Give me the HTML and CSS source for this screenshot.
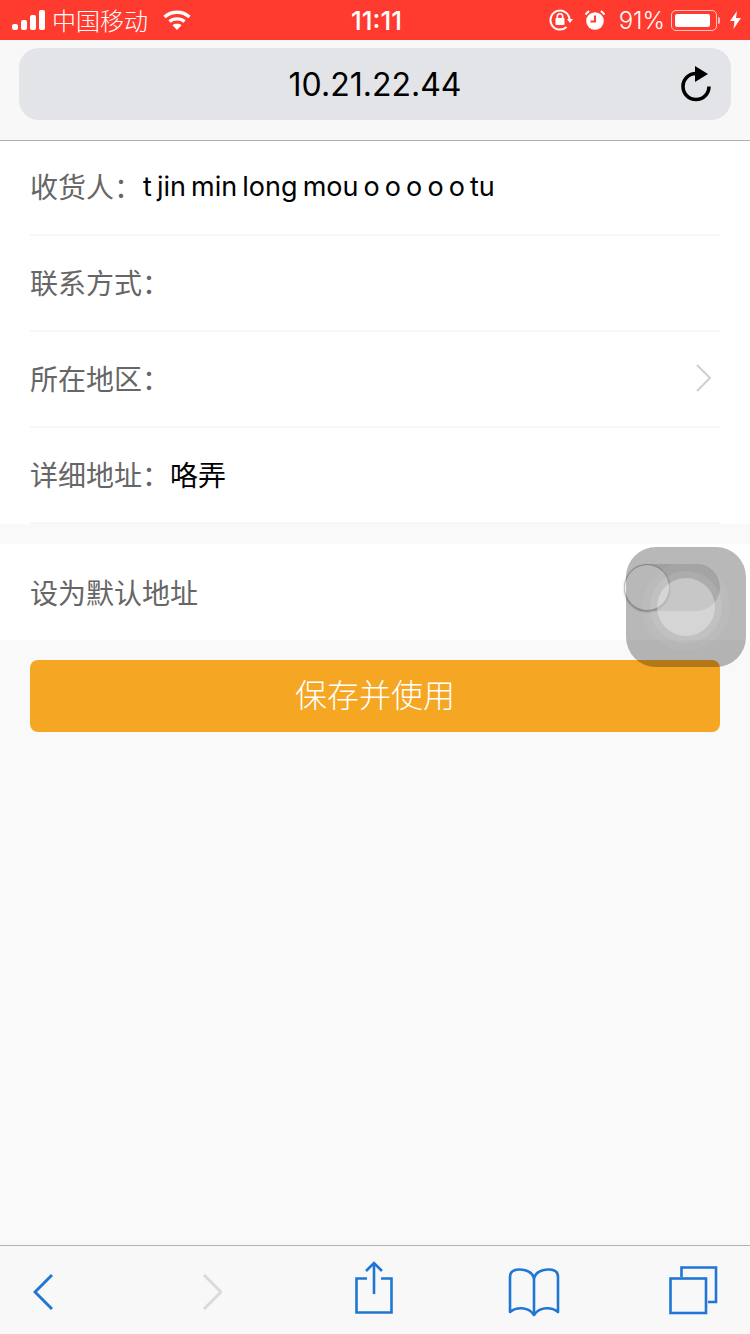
FILE: index.html
```html
<!DOCTYPE html>
<html>
  <head>
    <meta charset="UTF-8" />
    <title>收货地址</title>
    <link rel="stylesheet" href="styles.css">
  </head>
  <body>
    <div class="page">
      <div class="statusbar">
        <div class="status-left">
          <svg class="signal" width="34" height="20" viewBox="0 0 34 20" fill="#fff">
            <rect x="0" y="14" width="6" height="6" rx="2" />
            <rect x="9" y="10" width="6" height="10" rx="2" />
            <rect x="18" y="5" width="6" height="15" rx="2" />
            <rect x="27" y="0" width="6" height="20" rx="2" />
          </svg>
          <span class="carrier">中国移动</span>
          <svg class="wifi" width="28" height="20" viewBox="0 0 28 20" fill="none" stroke="#fff" stroke-width="3.4">
            <path d="M1.5 7 C8.5 0.6 19.5 0.6 26.5 7" />
            <path d="M6.5 11.5 C10.5 8 17.5 8 21.5 11.5" />
            <path d="M14 20 L9.5 15.2 C12 13.4 16 13.4 18.5 15.2 Z" fill="#fff" stroke="none" />
          </svg>
        </div>
        <div class="status-time">11:11</div>
        <div class="status-right">
          <svg class="rotlock" width="24" height="22" viewBox="0 0 24 22" fill="none" stroke="#fff" stroke-width="2">
            <path d="M20.5 11 A9.5 9.5 0 1 0 17.5 18" />
            <path d="M18 10 L24 10 L21 14 Z" fill="#fff" stroke="none" />
            <rect x="6.5" y="9" width="9" height="7" rx="1" fill="#fff" stroke="none" />
            <path d="M8.3 9 V7.5 A2.7 2.7 0 0 1 13.7 7.5 V9" stroke-width="1.6" />
          </svg>
          <svg class="alarm" width="20" height="20" viewBox="0 0 20 20">
            <circle cx="10" cy="11" r="8.8" fill="#fff" />
            <path d="M10 5.5 V11.5 H5.5" fill="none" stroke="#ff3b30" stroke-width="2" />
            <path d="M0.5 4.5 L4 1 M19.5 4.5 L16 1" stroke="#fff" stroke-width="2" />
          </svg>
          <span class="battery-pct">91%</span>
          <div class="battery"><div class="battery-fill"></div></div>
          <div class="battery-nub"></div>
          <svg class="bolt" width="11" height="18" viewBox="0 0 11 18" fill="#fff">
            <path d="M7 0 L0 10 H4.5 L3.5 18 L11 7 H6 Z" />
          </svg>
        </div>
      </div>

      <div class="urlbar">
        <div class="urlpill">
          <span></span>
          <span class="urltext">10.21.22.44</span>
          <svg class="reload" width="32" height="36" viewBox="0 0 32 36" fill="none" stroke="#000" stroke-width="3.6">
            <path d="M16 7.5 A13 13 0 1 0 29 20.5" />
            <path d="M15 0 L28 8 L15 16 Z" fill="#000" stroke="none" />
          </svg>
        </div>
      </div>

      <div class="content">
        <div class="form">
          <div class="row"><span class="label">收货人：</span><span class="value value-latin">t jin min long mou o o o o o tu</span></div>
          <div class="row"><span class="label">联系方式：</span></div>
          <div class="row">
            <span class="label">所在地区：</span>
            <svg class="chevron" width="18" height="30" viewBox="0 0 18 30" fill="none" stroke="#cfcfcf" stroke-width="2">
              <path d="M2 2 L15 15 L2 28" />
            </svg>
          </div>
          <div class="row"><span class="label">详细地址：</span><span class="value">咯弄</span></div>
        </div>

        <div class="default-row">
          <span class="label">设为默认地址</span>
          <div class="switch"><div class="switch-thumb"></div></div>
        </div>

        <div class="save-btn">保存并使用</div>
      </div>

      <div class="toolbar">
        <svg class="tool tool-back" width="20" height="60" viewBox="0 0 20 60" fill="none" stroke="#1f76d3" stroke-width="3">
          <path d="M19 15 L2 32 L19 49" />
        </svg>
        <svg class="tool tool-forward" width="20" height="60" viewBox="0 0 20 60" fill="none" stroke="#dadada" stroke-width="3">
          <path d="M2 15 L19 32 L2 49" />
        </svg>
        <svg class="tool tool-share" width="40" height="60" viewBox="0 0 40 60" fill="none" stroke="#1f76d3" stroke-width="2.6">
          <path d="M13 18.5 H2.5 V52.5 H37.5 V18.5 H27" />
          <path d="M20 3 V34" />
          <path d="M12 11 L20 3 L28 11" />
        </svg>
        <svg class="tool tool-book" width="52" height="60" viewBox="0 0 52 60" fill="none" stroke="#1f76d3" stroke-width="2.6" stroke-linejoin="round">
          <path d="M26 18 C24 12 18 9.5 11 9.5 C5 9.5 2 12 2 17 V52 C8 47 20 46 26 55 C32 46 44 47 50 52 V17 C50 12 47 9.5 41 9.5 C34 9.5 28 12 26 18 Z" />
          <path d="M26 18 V55" />
        </svg>
        <svg class="tool tool-tabs" width="52" height="60" viewBox="0 0 52 60" fill="none" stroke="#1f76d3" stroke-width="2.6">
          <rect x="3.5" y="18.5" width="35.5" height="34.5" />
          <path d="M14.5 17 V7.5 H49 V42 H41" />
        </svg>
      </div>

      <div class="assistive">
        <div class="assistive-ring assistive-ring-lg"></div>
        <div class="assistive-ring assistive-ring-md"></div>
        <div class="assistive-dot"></div>
      </div>
    </div>
  </body>
</html>
```

FILE: styles.css
```css
html, body {
  margin: 0;
  padding: 0;
}
body {
  font-family: "Noto Sans CJK SC", sans-serif;
  background-color: #f9f9f9;
}
.page {
  position: relative;
  display: flex;
  flex-direction: column;
  width: 750px;
  height: 1334px;
  overflow: hidden;
}

/* status bar */
.statusbar {
  display: grid;
  grid-template-columns: 1fr auto 1fr;
  align-items: center;
  height: 40px;
  padding: 0 9px 0 12px;
  background-color: #ff3b30;
  color: white;
  font-size: 24px;
}
.status-left {
  display: flex;
  align-items: center;
}
.carrier {
  margin-left: 6px;
  font-weight: 300;
  line-height: 40px;
}
.wifi {
  margin-left: 15px;
}
.status-time {
  font-family: Inter, sans-serif;
  font-size: 26px;
  font-weight: 500;
}
.status-right {
  display: flex;
  align-items: center;
  justify-content: flex-end;
}
.alarm {
  margin-left: 12px;
}
.battery-pct {
  margin-left: 14px;
  font-family: Inter, sans-serif;
  font-size: 24px;
  font-weight: 300;
}
.battery {
  box-sizing: border-box;
  width: 46px;
  height: 21px;
  margin-left: 6px;
  padding: 3px;
  border: 1.5px solid rgba(255, 255, 255, 0.7);
  border-radius: 5px;
}
.battery-fill {
  width: 91%;
  height: 100%;
  background-color: white;
  border-radius: 2px;
}
.battery-nub {
  width: 2px;
  height: 7px;
  margin-left: 1px;
  background-color: rgba(255, 255, 255, 0.7);
  border-radius: 0 2px 2px 0;
}
.bolt {
  margin-left: 10px;
}

/* url bar */
.urlbar {
  position: relative;
  z-index: 1;
  box-sizing: border-box;
  height: 100px;
  padding: 8px 19px 0;
  background-color: #f8f8f8;
  box-shadow: 0 1px 0 #b2b2b2;
}
.urlpill {
  display: grid;
  grid-template-columns: 1fr auto 1fr;
  align-items: center;
  height: 72px;
  padding: 0 19px;
  background-color: #e3e4e7;
  border-radius: 20px;
}
.urltext {
  font-family: Inter, sans-serif;
  font-size: 32px;
  color: black;
}
.reload {
  justify-self: end;
  margin-bottom: 1px;
}

/* form */
.content {
  flex: 1;
}
.form {
  background-color: white;
}
.row {
  box-sizing: border-box;
  display: flex;
  align-items: center;
  height: 96px;
  margin: 0 30px;
  padding-bottom: 2px;
  border-bottom: 2px solid #f7f7f7;
}
.label {
  font-size: 28px;
  color: #666;
}
.value {
  font-size: 28px;
  color: black;
}
.value-latin {
  margin-left: 1px;
  font-family: Inter, sans-serif;
  font-size: 27px;
  word-spacing: -2.5px;
}
.chevron {
  margin-left: auto;
  margin-right: 7px;
}
.default-row {
  box-sizing: border-box;
  display: flex;
  align-items: center;
  justify-content: space-between;
  height: 96px;
  margin-top: 20px;
  padding: 0 30px 1px;
  background-color: white;
}
.switch {
  width: 95px;
  height: 47px;
  margin-bottom: 9px;
  background-color: #dedede;
  border-radius: 24px;
}
.switch-thumb {
  box-sizing: border-box;
  width: 46px;
  height: 47px;
  margin-left: -1px;
  background-color: white;
  border: 1px solid #bbb;
  border-radius: 50%;
  box-shadow: 0 1px 2px rgba(0, 0, 0, 0.3);
}
.save-btn {
  height: 72px;
  margin: 20px 30px 0;
  background-color: #f5a623;
  border-radius: 8px;
  color: white;
  font-size: 32px;
  font-weight: 300;
  line-height: 67px;
  text-align: center;
}

/* bottom toolbar */
.toolbar {
  box-sizing: border-box;
  display: flex;
  align-items: center;
  height: 89px;
  padding-left: 33px;
  background-color: #f8f8f8;
  border-top: 1px solid #b2b2b2;
}
.tool-forward {
  margin-left: 149px;
}
.tool-share {
  margin-left: 132px;
}
.tool-book {
  margin-left: 114px;
}
.tool-tabs {
  margin-left: 107px;
}

/* floating assistive touch button over the page */
.assistive {
  position: absolute;
  left: 626px;
  top: 547px;
  display: flex;
  align-items: center;
  justify-content: center;
  width: 120px;
  height: 120px;
  background-color: rgba(0, 0, 0, 0.28);
  border-radius: 30px;
}
.assistive-ring,
.assistive-dot {
  position: absolute;
  border-radius: 50%;
}
.assistive-ring-lg {
  width: 88px;
  height: 88px;
  background-color: rgba(255, 255, 255, 0.05);
}
.assistive-ring-md {
  width: 72px;
  height: 72px;
  background-color: rgba(255, 255, 255, 0.09);
}
.assistive-dot {
  width: 58px;
  height: 58px;
  background-color: rgba(255, 255, 255, 0.33);
}
```
